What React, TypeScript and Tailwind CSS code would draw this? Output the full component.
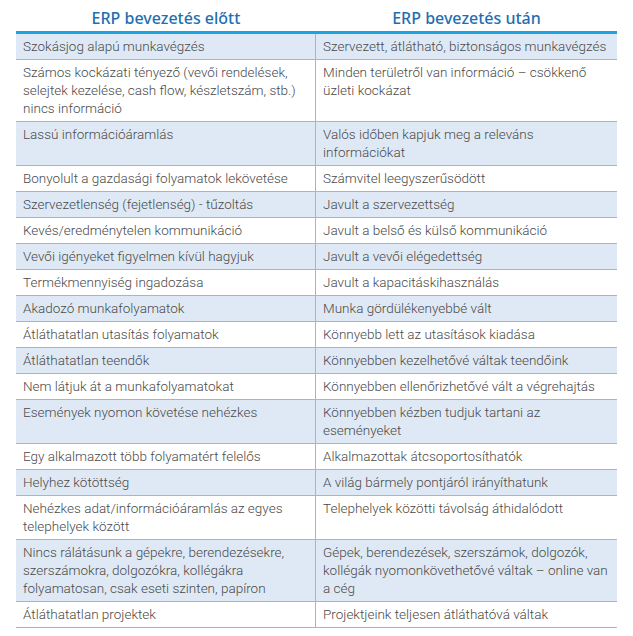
const rows: [string, string][] = [
  ["Szokásjog alapú munkavégzés", "Szervezett, átlátható, biztonságos munkavégzés"],
  [
    "Számos kockázati tényező (vevői rendelések, selejtek kezelése, cash flow, készletszám, stb.) nincs információ",
    "Minden területről van információ – csökkenő üzleti kockázat",
  ],
  ["Lassú információáramlás", "Valós időben kapjuk meg a releváns információkat"],
  ["Bonyolult a gazdasági folyamatok lekövetése", "Számvitel leegyszerűsödött"],
  ["Szervezetlenség (fejetlenség) - tűzoltás", "Javult a szervezettség"],
  ["Kevés/eredménytelen kommunikáció", "Javult a belső és külső kommunikáció"],
  ["Vevői igényeket figyelmen kívül hagyjuk", "Javult a vevői elégedettség"],
  ["Termékmennyiség ingadozása", "Javult a kapacitáskihasználás"],
  ["Akadozó munkafolyamatok", "Munka gördülékenyebbé vált"],
  ["Átláthatatlan utasítás folyamatok", "Könnyebb lett az utasítások kiadása"],
  ["Átláthatatlan teendők", "Könnyebben kezelhetővé váltak teendőink"],
  ["Nem látjuk át a munkafolyamatokat", "Könnyebben ellenőrizhetővé vált a végrehajtás"],
  ["Események nyomon követése nehézkes", "Könnyebben kézben tudjuk tartani az eseményeket"],
  ["Egy alkalmazott több folyamatért felelős", "Alkalmazottak átcsoportosíthatók"],
  ["Helyhez kötöttség", "A világ bármely pontjáról irányíthatunk"],
  ["Nehézkes adat/információáramlás az egyes telephelyek között", "Telephelyek közötti távolság áthidalódott"],
  [
    "Nincs rálátásunk a gépekre, berendezésekre, szerszámokra, dolgozókra, kollégákra folyamatosan, csak eseti szinten, papíron",
    "Gépek, berendezések, szerszámok, dolgozók, kollégák nyomonkövethetővé váltak – online van a cég",
  ],
  ["Átláthatatlan projektek", "Projektjeink teljesen átláthatóvá váltak"],
];

export default function App() {
  return (
    <div className="h-[636px] w-[633px] bg-white px-4 pt-[7px]">
      <div className="w-[601px]">
        <div className="grid grid-cols-[300px_301px] border-b-[3px] border-[#1ba3df] pb-[2px]">
          {["ERP bevezetés előtt", "ERP bevezetés után"].map((h) => (
            <div
              key={h}
              className="text-center font-['Noto_Sans',sans-serif] text-[16px] font-medium leading-[22px] text-[#1f6fb0]"
            >
              {h}
            </div>
          ))}
        </div>
        {rows.map(([before, after], i) => (
          <div
            key={i}
            className={`grid grid-cols-[300px_301px] border-b border-[#b3b3b3] font-['Roboto',sans-serif] text-[13.5px] font-light leading-[18px] text-[#4a4a4a] ${
              i % 2 === 0 ? "bg-[#dfe9f5]" : "bg-white"
            }`}
          >
            <div className="border-r border-[#b3b3b3] pt-[3px] pb-[4px] pl-[7px] pr-[6px]">{before}</div>
            <div className="pt-[3px] pb-[4px] pl-[7px] pr-[4px]">{after}</div>
          </div>
        ))}
      </div>
    </div>
  );
}
